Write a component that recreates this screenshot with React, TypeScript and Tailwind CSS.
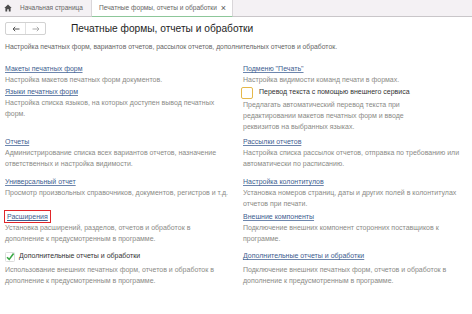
import React from "react"

const font = "font-['Liberation_Sans',Arial,sans-serif]"

function Link({ text, boxed }: { text: string; boxed?: boolean }) {
    if (boxed) {
        return (
            <div className="h-[11px] flex items-center">
                <span className="-ml-[1px] px-[2px] py-[1px] border-[1.5px] border-[#e0262a] leading-[9px] text-[7px] text-[#3d5d8f] underline decoration-[#3d5d8f]">
                    {text}
                </span>
            </div>
        )
    }
    return (
        <div className="h-[11px] leading-[11px] text-[7px] text-[#3d5d8f] underline decoration-[#6d86ad] whitespace-nowrap">
            {text}
        </div>
    )
}

function Desc({ lines }: { lines: string[] }) {
    return (
        <div className="text-[7px] leading-[11px] text-[#8a8a86]">
            {lines.map((l, i) => (
                <div key={i} className="whitespace-nowrap">{l}</div>
            ))}
        </div>
    )
}

export default function App() {
    return (
        <div className={`w-[472px] h-[314px] bg-white overflow-hidden ${font}`}>
            {/* tabs */}
            <div className="h-[17px] flex bg-[#f4f1f4] border-b border-[#c9c6c9]">
                <div className="w-[92px] flex items-center pl-[4px] border-r border-[#d9d6d9] text-[6.5px] text-[#666] whitespace-nowrap">
                    <svg width="8" height="8" viewBox="0 0 8 8" className="mr-[8px] shrink-0">
                        <path d="M4 0.5 L0.3 4 H1.4 V7.5 H3.2 V5.3 H4.8 V7.5 H6.6 V4 H7.7 Z" fill="#4a4a4a" />
                    </svg>
                    Начальная страница
                </div>
                <div className="w-[141px] flex items-center justify-between bg-white pl-[7px] pr-[6px] border-r border-[#d9d6d9] border-b-[1.5px] border-b-[#8dc79a] -mb-[1px] text-[6.6px] text-[#666] whitespace-nowrap">
                    <span>Печатные формы, отчеты и обработки</span>
                    <span className="text-[9px] leading-none text-[#555]">×</span>
                </div>
            </div>

            {/* toolbar */}
            <div className="flex items-center h-[17px] mt-[3px] px-[5px]">
                <div className="flex h-[13px] border border-[#d2d2d2] rounded-[2px] bg-white">
                    <div className="w-[20px] flex items-center justify-center border-r border-[#e0e0e0]">
                        <svg width="8" height="6" viewBox="0 0 8 6">
                            <path d="M7.5 3 H1 M3.2 0.8 L1 3 L3.2 5.2" stroke="#555" strokeWidth="1" fill="none" />
                        </svg>
                    </div>
                    <div className="w-[19px] flex items-center justify-center">
                        <svg width="8" height="6" viewBox="0 0 8 6">
                            <path d="M0.5 3 H7 M4.8 0.8 L7 3 L4.8 5.2" stroke="#aaa" strokeWidth="1" fill="none" />
                        </svg>
                    </div>
                </div>
                <div className="ml-[25px] text-[10.2px] leading-[17px] text-[#1e1e1e] whitespace-nowrap">
                    Печатные формы, отчеты и обработки
                </div>
            </div>

            <div className="px-[5px] mt-[4px] text-[6.8px] leading-[11px] text-[#666] whitespace-nowrap">
                Настройка печатных форм, вариантов отчетов, рассылок отчетов, дополнительных отчетов и обработок.
            </div>

            {/* sections */}
            <div className="grid grid-cols-[233px_1fr] gap-x-[5px] px-[5px] mt-[11px]">
                {/* row 1 */}
                <div>
                    <Link text="Макеты печатных форм" />
                    <Desc lines={["Настройка макетов печатных форм документов."]} />
                    <div className="mt-[1px]">
                        <Link text="Языки печатных форм" />
                        <Desc lines={["Настройка списка языков, на которых доступен вывод печатных", "форм."]} />
                    </div>
                </div>
                <div>
                    <Link text={'Подменю "Печать"'} />
                    <Desc lines={["Настройка видимости команд печати в формах."]} />
                    <div className="mt-[1px] h-[13px] flex items-center">
                        <div className="w-[12px] h-[12px] -ml-[2px] mr-[6px] rounded-[2px] border border-[#e5b84a] bg-white" />
                        <span className="text-[7px] text-[#333]">Перевод текста с помощью внешнего сервиса</span>
                    </div>
                    <Desc lines={["Предлагать автоматический перевод текста при", "редактировании макетов печатных форм и вводе", "реквизитов на выбранных языках."]} />
                </div>

                {/* row 2 */}
                <div className="mt-[4px]">
                    <Link text="Отчеты" />
                    <Desc lines={["Администрирование списка всех вариантов отчетов, назначение", "ответственных и настройка видимости."]} />
                </div>
                <div className="mt-[4px]">
                    <Link text="Рассылки отчетов" />
                    <Desc lines={["Настройка списка рассылок отчетов, отправка по требованию или", "автоматически по расписанию."]} />
                </div>

                {/* row 3 */}
                <div className="mt-[7px]">
                    <Link text="Универсальный отчет" />
                    <Desc lines={["Просмотр произвольных справочников, документов, регистров и т.д."]} />
                </div>
                <div className="mt-[7px]">
                    <Link text="Настройка колонтитулов" />
                    <Desc lines={["Установка номеров страниц, даты и других полей в колонтитулах", "отчетов при печати."]} />
                </div>

                {/* row 4 */}
                <div className="mt-[2px]">
                    <Link text="Расширения" boxed />
                    <Desc lines={["Установка расширений, разделов, отчетов и обработок в", "дополнение к предусмотренным в программе."]} />
                </div>
                <div className="mt-[2px]">
                    <Link text="Внешние компоненты" />
                    <Desc lines={["Подключение внешних компонент сторонних поставщиков к", "программе."]} />
                </div>

                {/* row 5 */}
                <div className="mt-[6px]">
                    <div className="h-[13px] flex items-center">
                        <svg width="10" height="10" viewBox="0 0 10 10" className="mr-[4px]">
                            <rect x="0.5" y="0.5" width="9" height="9" rx="1" fill="#fff" stroke="#dcdcdc" />
                            <path d="M2 5.2 L4.2 7.4 L8.6 1.6" stroke="#3aa845" strokeWidth="1.6" fill="none" />
                        </svg>
                        <span className="text-[7px] text-[#333]">Дополнительные отчеты и обработки</span>
                    </div>
                    <div className="mt-[1px]">
                        <Desc lines={["Использование внешних печатных форм, отчетов и обработок в", "дополнение к предусмотренным в программе."]} />
                    </div>
                </div>
                <div className="mt-[6px]">
                    <div className="h-[13px] flex items-center text-[7px] text-[#3d5d8f] underline decoration-[#6d86ad]">
                        Дополнительные отчеты и обработки
                    </div>
                    <div className="mt-[1px]">
                        <Desc lines={["Подключение внешних печатных форм, отчетов и обработок в", "дополнение к предусмотренным в программе."]} />
                    </div>
                </div>
            </div>
        </div>
    )
}
